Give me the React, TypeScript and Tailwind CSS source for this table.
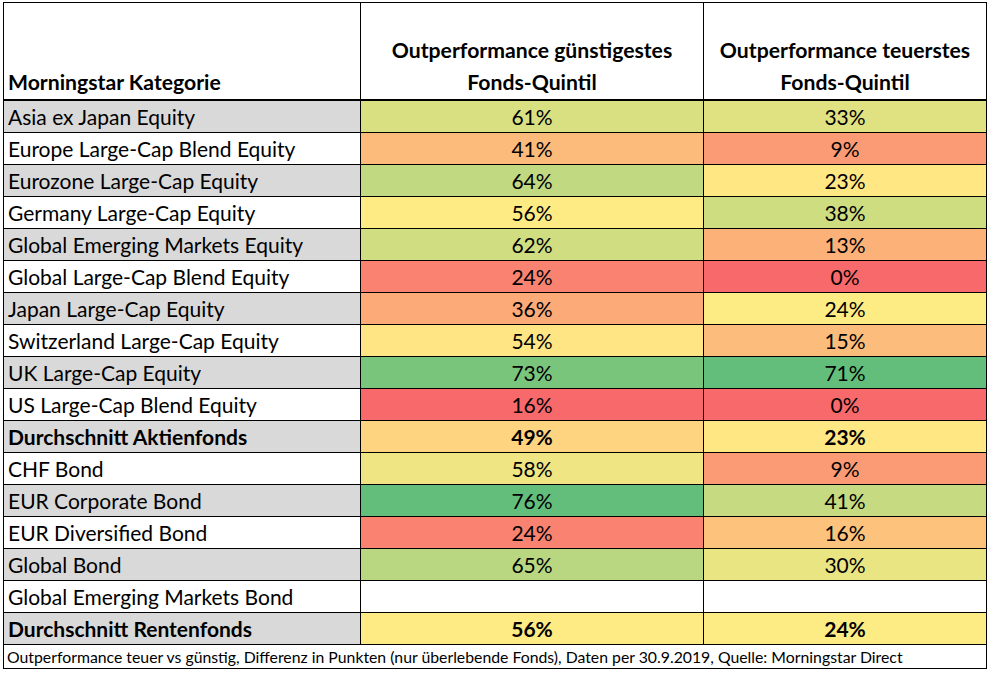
import { FC } from 'react'

interface Row {
  name: string
  a: string
  aBg: string
  b: string
  bBg: string
  bold?: boolean
  gray?: boolean
}

const rows: Row[] = [
  { name: 'Asia ex Japan Equity', a: '61%', aBg: 'bg-[#d8e082]', b: '33%', bBg: 'bg-[#e0e282]', gray: true },
  { name: 'Europe Large-Cap Blend Equity', a: '41%', aBg: 'bg-[#fcba7b]', b: '9%', bBg: 'bg-[#fb9b75]' },
  { name: 'Eurozone Large-Cap Equity', a: '64%', aBg: 'bg-[#c1d980]', b: '23%', bBg: 'bg-[#ffe883]', gray: true },
  { name: 'Germany Large-Cap Equity', a: '56%', aBg: 'bg-[#ffeb84]', b: '38%', bBg: 'bg-[#cfdd81]' },
  { name: 'Global Emerging Markets Equity', a: '62%', aBg: 'bg-[#d0de81]', b: '13%', bBg: 'bg-[#fcb179]', gray: true },
  { name: 'Global Large-Cap Blend Equity', a: '24%', aBg: 'bg-[#f98370]', b: '0%', bBg: 'bg-[#f8696b]' },
  { name: 'Japan Large-Cap Equity', a: '36%', aBg: 'bg-[#fcaa78]', b: '24%', bBg: 'bg-[#fdeb84]', gray: true },
  { name: 'Switzerland Large-Cap Equity', a: '54%', aBg: 'bg-[#ffe583]', b: '15%', bBg: 'bg-[#fcbc7b]' },
  { name: 'UK Large-Cap Equity', a: '73%', aBg: 'bg-[#7ac57c]', b: '71%', bBg: 'bg-[#63be7b]', gray: true },
  { name: 'US Large-Cap Blend Equity', a: '16%', aBg: 'bg-[#f8696b]', b: '0%', bBg: 'bg-[#f8696b]' },
  { name: 'Durchschnitt Aktienfonds', a: '49%', aBg: 'bg-[#fed480]', b: '23%', bBg: 'bg-[#ffe883]', gray: true, bold: true },
  { name: 'CHF Bond', a: '58%', aBg: 'bg-[#efe683]', b: '9%', bBg: 'bg-[#fb9b75]' },
  { name: 'EUR Corporate Bond', a: '76%', aBg: 'bg-[#63be7b]', b: '41%', bBg: 'bg-[#c6da81]', gray: true },
  { name: 'EUR Diversified Bond', a: '24%', aBg: 'bg-[#f98370]', b: '16%', bBg: 'bg-[#fdc27c]' },
  { name: 'Global Bond', a: '65%', aBg: 'bg-[#b9d780]', b: '30%', bBg: 'bg-[#eae583]', gray: true },
  { name: 'Global Emerging Markets Bond', a: '', aBg: 'bg-white', b: '', bBg: 'bg-white' },
  { name: 'Durchschnitt Rentenfonds', a: '56%', aBg: 'bg-[#ffeb84]', b: '24%', bBg: 'bg-[#fdeb84]', gray: true, bold: true },
]

const HeadCell: FC<{ lines: string[]; center?: boolean }> = ({ lines, center }) => (
  <div
    className={`h-[98px] border-r border-b-2 border-black flex flex-col justify-end pb-[1px] ${
      center ? 'items-center text-center' : 'pl-[4px]'
    }`}
  >
    {lines.map((l) => (
      <div key={l} className="leading-[32px] font-bold text-[21.2px] whitespace-nowrap">
        {l}
      </div>
    ))}
  </div>
)

const App = () => {
  return (
    <div className="w-[991px] h-[673px] bg-white pt-[2px] pl-[3px] text-black font-['Lato','Liberation_Sans',sans-serif]">
      <div className="w-[984px] border-l border-t border-black grid grid-cols-[357px_343px_283px] text-[21px]">
        <HeadCell lines={['Morningstar Kategorie']} />
        <HeadCell lines={['Outperformance günstigestes', 'Fonds-Quintil']} center />
        <HeadCell lines={['Outperformance teuerstes', 'Fonds-Quintil']} center />

        {rows.map((r) => (
          <div key={r.name} className="contents">
            <div
              className={`h-[32px] border-r border-b border-black pl-[4px] flex items-center whitespace-nowrap ${
                r.gray ? 'bg-[#d9d9d9]' : 'bg-white'
              } ${r.bold ? 'font-bold' : ''}`}
            >
              {r.name}
            </div>
            <div
              className={`h-[32px] border-r border-b border-black flex items-center justify-center ${r.aBg} ${
                r.bold ? 'font-bold' : ''
              }`}
            >
              {r.a}
            </div>
            <div
              className={`h-[32px] border-r border-b border-black flex items-center justify-center ${r.bBg} ${
                r.bold ? 'font-bold' : ''
              }`}
            >
              {r.b}
            </div>
          </div>
        ))}

        <div className="col-span-3 h-[24px] border-r border-b border-black pl-[3px] flex items-center text-[15.8px] whitespace-nowrap">
          Outperformance teuer vs günstig, Differenz in Punkten (nur überlebende Fonds), Daten per 30.9.2019, Quelle:
          Morningstar Direct
        </div>
      </div>
    </div>
  )
}

export default App
